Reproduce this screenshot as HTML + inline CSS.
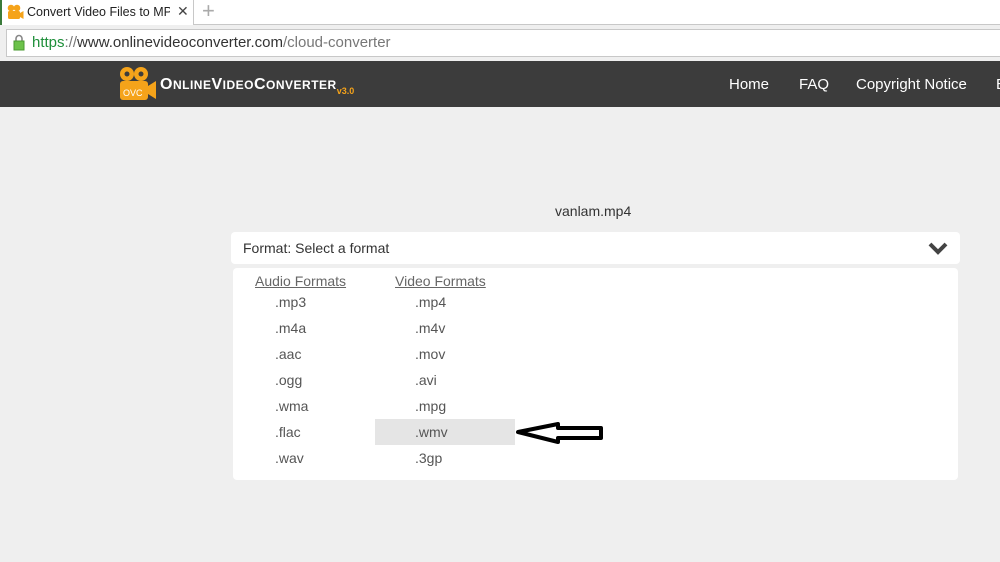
<!DOCTYPE html>
<html><head><meta charset="utf-8"><style>
*{margin:0;padding:0;box-sizing:border-box}
body{width:1000px;height:562px;overflow:hidden;background:#efefef;font-family:"Liberation Sans",sans-serif;position:relative}
.abs{position:absolute}
.tabbar{left:0;top:0;width:1000px;height:25px;background:#fff;border-bottom:1px solid #c8c8c8}
.tab{left:0;top:0;width:194px;height:25px;background:#fff;border-right:1px solid #c8c8c8;border-left:2px solid #3a7a3a}
.urlbar{left:6px;top:29px;width:994px;height:28px;background:#fff;border:1px solid #c8c8c8;border-right:none}
.nav{left:0;top:61px;width:1000px;height:46px;background:#3c3c3c}
.nav a{position:absolute;top:15px;color:#fff;font-size:15px;text-decoration:none}
.panel{background:#fff;border-radius:4px}
.f{position:absolute;font-size:14px;color:#555}
</style></head><body>
<div class="abs tabbar"></div>
<div class="abs tab">
<svg class="abs" style="left:5px;top:4px" width="17" height="16" viewBox="0 0 17 16"><circle cx="4" cy="4" r="3.3" fill="#f5a31a"/><circle cx="10" cy="4" r="3.3" fill="#f5a31a"/><rect x="1" y="7" width="12" height="8" rx="1.5" fill="#f5a31a"/><path d="M13 9l3.5-2v8L13 13z" fill="#f5a31a"/></svg>
<span class="abs" style="left:25px;top:5px;font-size:12.5px;color:#222;white-space:nowrap;width:143px;overflow:hidden">Convert Video Files to MP3</span>
<span class="abs" style="left:175px;top:3px;font-size:14px;color:#444">✕</span>
</div>
<span class="abs" style="left:202px;top:0px;font-size:22px;color:#aaa;line-height:22px">+</span>
<div class="abs urlbar"></div>
<svg class="abs" style="left:13px;top:34px" width="12" height="17" viewBox="0 0 12 17"><path d="M3 7V4.5a3 3 0 0 1 6 0V7" stroke="#888" stroke-width="1.6" fill="none"/><rect x="1" y="7" width="10" height="9" fill="#6cc24a" stroke="#4a9a30"/></svg>
<div class="abs" style="left:32px;top:34px;font-size:15px;color:#333;white-space:nowrap"><span style="color:#1e8f3a">https</span><span style="color:#777">://</span>www.onlinevideoconverter.com<span style="color:#777">/cloud-converter</span></div>
<div class="abs nav">
<svg class="abs" style="left:118px;top:5px" width="40" height="35" viewBox="0 0 40 35"><circle cx="9" cy="8" r="7" fill="#f5a31a"/><circle cx="23" cy="8" r="7" fill="#f5a31a"/><circle cx="9" cy="8" r="2.5" fill="#3c3c3c"/><circle cx="23" cy="8" r="2.5" fill="#3c3c3c"/><rect x="2" y="15" width="28" height="19" rx="3" fill="#f5a31a"/><path d="M30 20l8-5v18l-8-5z" fill="#f5a31a"/><text x="5" y="30" font-size="9" fill="#fff" font-family="Liberation Sans">OVC</text></svg>
<div class="abs" style="left:160px;top:15px;color:#fff;font-weight:bold;font-size:16px;white-space:nowrap;letter-spacing:0.5px">O<span style="font-size:12px">NLINE</span>V<span style="font-size:12px">IDEO</span>C<span style="font-size:12px">ONVERTER</span><span style="color:#f5a31a;font-size:9px;vertical-align:-5px;letter-spacing:0">v3.0</span></div>
<a style="left:729px">Home</a><a style="left:799px">FAQ</a><a style="left:856px">Copyright Notice</a><a style="left:996px">B</a>
</div>
<div class="abs" style="left:555px;top:203px;font-size:14px;color:#333">vanlam.mp4</div>
<div class="abs panel" style="left:231px;top:232px;width:729px;height:32px"></div>
<div class="abs" style="left:243px;top:240px;font-size:14px;color:#333">Format: Select a format</div>
<svg class="abs" style="left:928px;top:241px" width="20" height="14" viewBox="0 0 20 14"><path d="M2 3l8 8 8-8" stroke="#444" stroke-width="4" fill="none"/></svg>
<div class="abs panel" style="left:233px;top:268px;width:725px;height:212px"></div>
<div class="abs" style="left:375px;top:419px;width:140px;height:26px;background:#e5e5e5"></div>
<div class="f" style="left:255px;top:273px;text-decoration:underline;color:#666">Audio Formats</div>
<div class="f" style="left:395px;top:273px;text-decoration:underline;color:#666">Video Formats</div>
<div class="f" style="left:275px;top:294px">.mp3</div><div class="f" style="left:275px;top:320px">.m4a</div><div class="f" style="left:275px;top:346px">.aac</div><div class="f" style="left:275px;top:372px">.ogg</div><div class="f" style="left:275px;top:398px">.wma</div><div class="f" style="left:275px;top:424px">.flac</div><div class="f" style="left:275px;top:450px">.wav</div>
<div class="f" style="left:415px;top:294px">.mp4</div><div class="f" style="left:415px;top:320px">.m4v</div><div class="f" style="left:415px;top:346px">.mov</div><div class="f" style="left:415px;top:372px">.avi</div><div class="f" style="left:415px;top:398px">.mpg</div><div class="f" style="left:415px;top:424px">.wmv</div><div class="f" style="left:415px;top:450px">.3gp</div>
<svg class="abs" style="left:512px;top:418px" width="94" height="30" viewBox="0 0 94 30"><path d="M6 14L46 6V10H89V20H46V24Z" fill="#fff" stroke="#000" stroke-width="4" stroke-linejoin="round"/></svg>
</body></html>
